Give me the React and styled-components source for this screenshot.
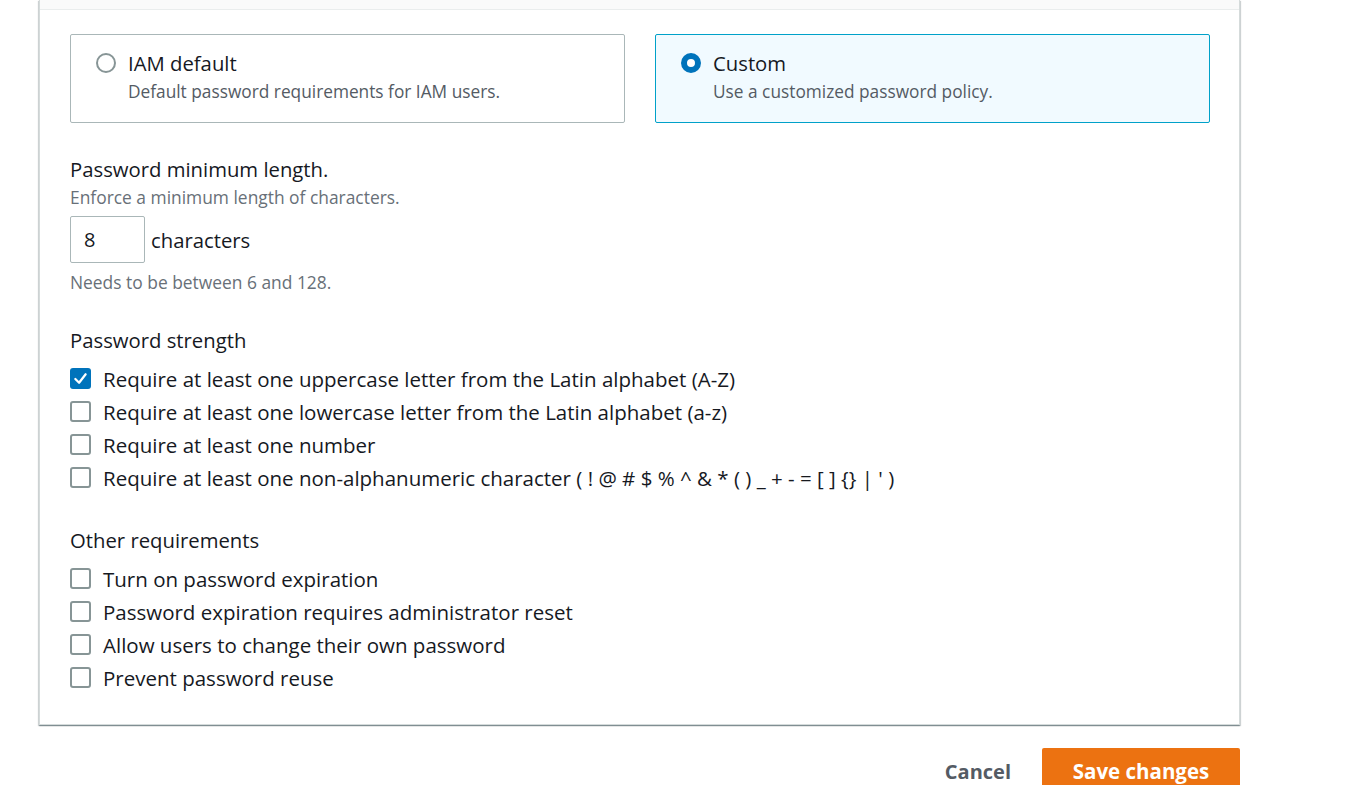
import styled, { createGlobalStyle } from "styled-components";

const GlobalStyle = createGlobalStyle`
  body {
    margin: 0;
    background: #ffffff;
    font-family: "Open Sans", "Noto Sans", sans-serif;
    color: #16191f;
  }
`;

const Page = styled.div`
  padding-left: 39px;
  width: 1201px;
`;

const Panel = styled.section`
  border: 1px solid #d5dbdb;
  border-top: none;
  box-shadow: 0 1px 1px rgba(0, 28, 36, 0.3), 1px 1px 1px rgba(0, 28, 36, 0.15),
    -1px 1px 1px rgba(0, 28, 36, 0.15);
  background: #ffffff;
`;

const HeaderStrip = styled.div`
  height: 9px;
  background: #fafafa;
  border-bottom: 1px solid #eaeded;
`;

const Body = styled.div`
  padding: 24px 29px 30px 30px;
`;

const Tiles = styled.div`
  display: grid;
  grid-template-columns: 1fr 1fr;
  gap: 30px;
`;

const Tile = styled.label`
  display: flex;
  gap: 12px;
  padding: 16px 24px 19px 25px;
  border: 1px solid ${(p) => (p.$selected ? "#00a1c9" : "#aab7b8")};
  border-radius: 2px;
  background: ${(p) => (p.$selected ? "#f1faff" : "#ffffff")};
`;

const Radio = styled.span`
  flex: none;
  width: 20px;
  height: 20px;
  margin-top: 2px;
  box-sizing: border-box;
  border-radius: 50%;
  border: ${(p) => (p.$checked ? "6px solid #0073bb" : "2px solid #879596")};
  background: #ffffff;
`;

const TileText = styled.div`
  display: flex;
  flex-direction: column;
`;

const TileTitle = styled.span`
  font-size: 20.3px;
  line-height: 24px;
`;

const TileDesc = styled.span`
  margin-top: 6px;
  font-size: 17.3px;
  line-height: 22px;
  color: #545b64;
`;

const Heading = styled.div`
  margin-top: ${(p) => p.$top}px;
  font-size: 20.3px;
  line-height: 24px;
`;

const Hint = styled.div`
  margin-top: ${(p) => p.$top}px;
  font-size: 17.4px;
  line-height: 22px;
  color: #687078;
`;

const LengthRow = styled.div`
  margin-top: 8px;
  display: flex;
  align-items: center;
  gap: 6px;
  font-size: 20.3px;
`;

const NumberBox = styled.div`
  width: 75px;
  height: 47px;
  box-sizing: border-box;
  border: 1px solid #aab7b8;
  border-radius: 2px;
  padding-left: 13px;
  display: flex;
  align-items: center;
  font-size: 20px;
`;

const CheckList = styled.div`
  margin-top: 10px;
  display: flex;
  flex-direction: column;
`;

const CheckRow = styled.label`
  display: flex;
  align-items: center;
  gap: 12px;
  height: 33px;
  font-size: 20.5px;
`;

const Box = styled.span`
  flex: none;
  width: 21px;
  height: 21px;
  box-sizing: border-box;
  border-radius: 3px;
  border: ${(p) => (p.$checked ? "none" : "2px solid #879596")};
  background: ${(p) => (p.$checked ? "#0073bb" : "#ffffff")};
  display: flex;
  align-items: center;
  justify-content: center;
`;

const Actions = styled.div`
  margin-top: 23px;
  display: flex;
  justify-content: flex-end;
  align-items: center;
  gap: 31px;
`;

const LinkButton = styled.button`
  border: none;
  background: none;
  font-family: inherit;
  font-size: 20px;
  font-weight: 700;
  color: #545b64;
  padding: 0;
`;

const PrimaryButton = styled.button`
  width: 198px;
  height: 46px;
  border: none;
  border-radius: 2px;
  background: #ec7211;
  color: #ffffff;
  font-family: inherit;
  font-size: 20.5px;
  font-weight: 700;
`;

const Check = () => (
  <svg width="15" height="15" viewBox="0 0 16 16">
    <path d="M2.5 8.5 L6.5 12.5 L13.5 3.5" fill="none" stroke="#fff" strokeWidth="2.4" strokeLinecap="round" strokeLinejoin="round" />
  </svg>
);

const strength = [
  ["Require at least one uppercase letter from the Latin alphabet (A-Z)", true],
  ["Require at least one lowercase letter from the Latin alphabet (a-z)", false],
  ["Require at least one number", false],
  ["Require at least one non-alphanumeric character ( ! @ # $ % ^ & * ( ) _ + - = [ ] {} | ' )", false],
];

const other = [
  "Turn on password expiration",
  "Password expiration requires administrator reset",
  "Allow users to change their own password",
  "Prevent password reuse",
];

export default function App() {
  return (
    <Page>
      <GlobalStyle />
      <Panel>
        <HeaderStrip />
        <Body>
          <Tiles>
            <Tile>
              <Radio />
              <TileText>
                <TileTitle>IAM default</TileTitle>
                <TileDesc>Default password requirements for IAM users.</TileDesc>
              </TileText>
            </Tile>
            <Tile $selected>
              <Radio $checked />
              <TileText>
                <TileTitle>Custom</TileTitle>
                <TileDesc>Use a customized password policy.</TileDesc>
              </TileText>
            </Tile>
          </Tiles>

          <Heading $top={34}>Password minimum length.</Heading>
          <Hint $top={5}>Enforce a minimum length of characters.</Hint>
          <LengthRow>
            <NumberBox>8</NumberBox>
            characters
          </LengthRow>
          <Hint $top={8}>Needs to be between 6 and 128.</Hint>

          <Heading $top={35}>Password strength</Heading>
          <CheckList>
            {strength.map(([label, on]) => (
              <CheckRow key={label}>
                <Box $checked={on}>{on && <Check />}</Box>
                {label}
              </CheckRow>
            ))}
          </CheckList>

          <Heading $top={34}>Other requirements</Heading>
          <CheckList>
            {other.map((label) => (
              <CheckRow key={label}>
                <Box />
                {label}
              </CheckRow>
            ))}
          </CheckList>
        </Body>
      </Panel>
      <Actions>
        <LinkButton>Cancel</LinkButton>
        <PrimaryButton>Save changes</PrimaryButton>
      </Actions>
    </Page>
  );
}
